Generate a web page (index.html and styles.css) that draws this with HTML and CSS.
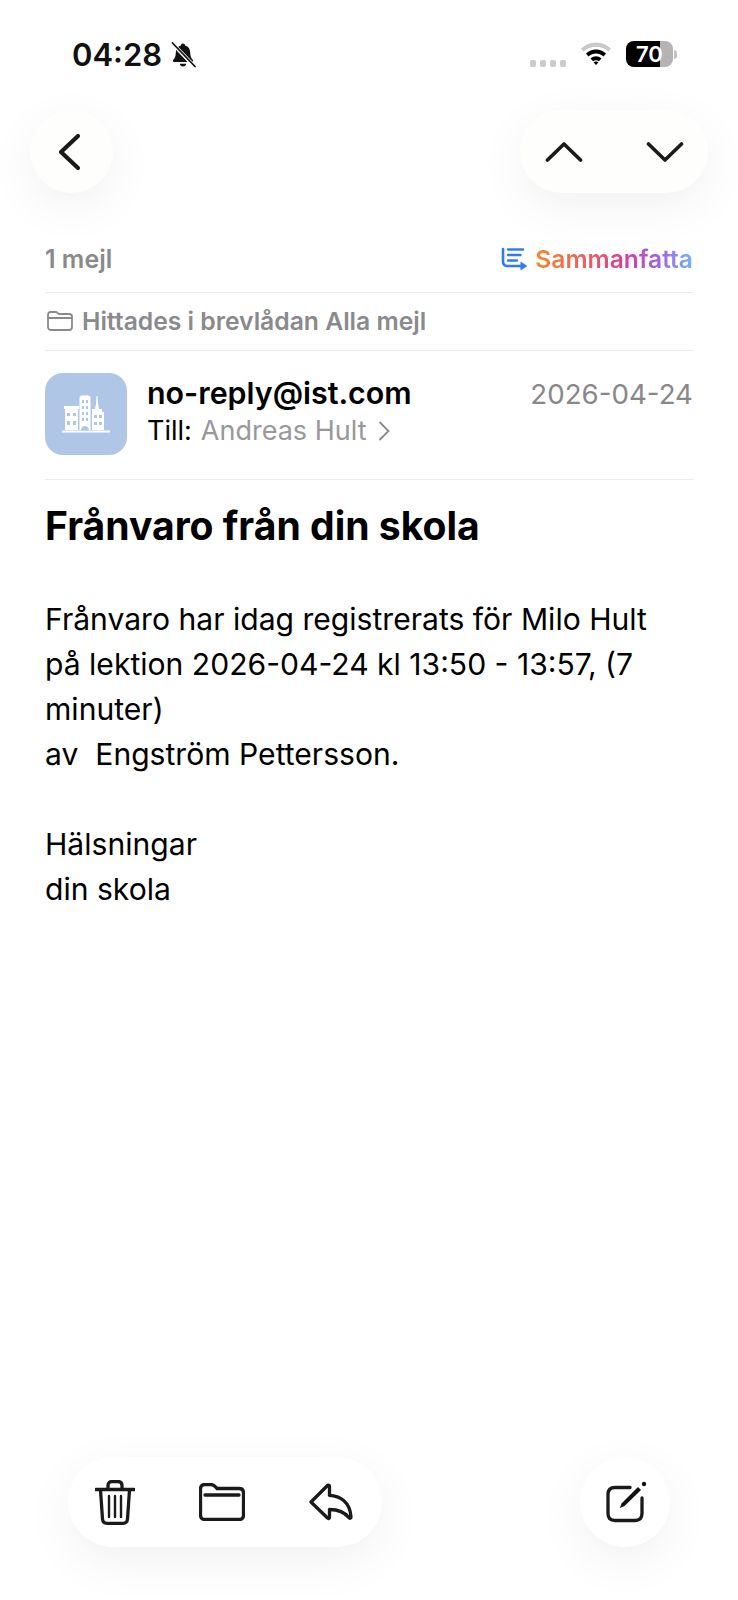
FILE: index.html
```html
<!DOCTYPE html>
<html lang="sv">
<head>
    <meta charset="UTF-8">
    <meta name="viewport" content="width=device-width, initial-scale=1.0">
    <title>Frånvaro från din skola</title>
    <link rel="stylesheet" href="styles.css">
</head>
<body>
    <div class="screen">
        <div class="status-bar">
            <div class="status-left">
                <span class="time">04:28</span>
                <svg class="bell" viewBox="0 0 26 26" width="26" height="26">
                    <path d="M13 1.500c1.200 0 2 .8 2.100 1.900 3.300.9 5.100 3.600 5.100 7.200 0 3.800 1 5.600 2.500 7.100.9.9.4 2.300-1 2.300H4.300c-1.400 0-1.900-1.400-1-2.300 1.500-1.500 2.500-3.300 2.500-7.100 0-3.600 1.800-6.300 5.100-7.200.1-1.100.9-1.900 2.100-1.900z" fill="#111"/>
                    <path d="M9.800 21.800h6.400c-.3 1.700-1.600 2.800-3.200 2.800s-2.900-1.100-3.200-2.800z" fill="#111"/>
                    <path d="M1.500 0.500L25 25" stroke="#fff" stroke-width="3.800"/>
                    <path d="M2.500 1L25 24.500" stroke="#111" stroke-width="1.800" stroke-linecap="round"/>
                </svg>
            </div>
            <div class="status-right">
                <div class="signal"><i></i><i></i><i></i><i></i></div>
                <svg class="wifi" viewBox="0 0 32 24" width="32" height="24">
                    <path d="M1 7.500C9.500-.5 22.500-.5 31 7.500l-2.500 3C21.500 4 10.500 4 3.500 10.500z" fill="#c9c9c9"/>
                    <path d="M6 12.500c5.800-5.300 14.200-5.300 20 0l-2.500 3c-4.400-4-10.600-4-15 0z" fill="#000"/>
                    <path d="M10.500 17.500c3.300-3 7.700-3 11 0l-2.600 2.800c-1.700-1.300-4.100-1.300-5.800 0z" fill="#000"/>
                    <path d="M13.500 21.200c1.500-1.100 3.500-1.100 5 0L16 24z" fill="#000"/>
                </svg>
                <div class="battery">
                    <div class="battery-body"><span class="battery-fill"></span><span class="battery-num">70</span></div>
                    <span class="battery-nub"></span>
                </div>
            </div>
        </div>

        <div class="nav">
            <button class="round-btn">
                <svg viewBox="0 0 24 38" width="24" height="38"><path d="M21 3L4 19l17 16" class="stroke back"/></svg>
            </button>
            <div class="updown">
                <svg viewBox="0 0 38 22" width="38" height="22"><path d="M2.500 19L19 3l16.500 16" class="stroke"/></svg>
                <svg viewBox="0 0 38 22" width="38" height="22"><path d="M2.500 3L19 19 35.500 3" class="stroke"/></svg>
            </div>
        </div>

        <main class="content">
            <div class="row count-row">
                <span class="count">1 mejl</span>
                <span class="summary">
                    <svg viewBox="0 0 27 24" width="27" height="24">
                        <path d="M2 2v12.500c0 3 1.600 4.500 4.500 4.500H20" fill="none" stroke="#2f7bf6" stroke-width="2.600" stroke-linecap="round"/>
                        <path d="M19.500 14.500l7 4.500-7 4.500z" fill="#2f7bf6"/>
                        <path d="M7 2.500h15M7 8h12.500M7 13.500h9" fill="none" stroke="#2f7bf6" stroke-width="2.400" stroke-linecap="round"/>
                    </svg>
                    <span class="summary-text">Sammanfatta</span>
                </span>
            </div>
            <div class="row found-row">
                <svg viewBox="0 0 26 20" width="26" height="20">
                    <path d="M1 4c0-1.700 1.100-3 2.800-3h4.700c1.100 0 1.700.4 2.400 1.100l.9.9h10.400c1.700 0 2.800 1.100 2.800 2.800V16c0 1.800-1.100 3-2.800 3H3.800C2.100 19 1 17.800 1 16zM1 7h24" fill="none" stroke="#8a8a8c" stroke-width="1.800"/>
                </svg>
                <span>Hittades i brevlådan Alla mejl</span>
            </div>
            <div class="row sender-row">
                <div class="avatar">
                    <svg viewBox="0 0 48 38" width="48" height="38">
                        <g fill="#fff">
                            <rect y="35.500" width="48" height="2"/>
                            <path d="M3 13h13v22H3z"/>
                            <path d="M2 11h15v3H2z"/>
                            <path d="M17.500 3c0-1.500 1-2.500 2.500-2.500h6c1.500 0 2.500 1 2.500 2.500v32h-11z"/>
                            <path d="M30 14h3l1-5 .5-8h1l.5 8 1 5h3v3h2v18H30z"/>
                        </g>
                        <g fill="#b0c6e6">
                            <rect x="5" y="18" width="3" height="3"/><rect x="11" y="18" width="3" height="3"/>
                            <rect x="5" y="26" width="3" height="4"/><rect x="11" y="26" width="3" height="4"/>
                            <rect x="20" y="5" width="2" height="3"/><rect x="24" y="5" width="2" height="3"/>
                            <rect x="20" y="11" width="2" height="3"/><rect x="24" y="11" width="2" height="3"/>
                            <rect x="20" y="17" width="2" height="3"/><rect x="24" y="17" width="2" height="3"/>
                            <rect x="20" y="23" width="2" height="3"/><rect x="24" y="23" width="2" height="3"/>
                            <path d="M19 35.500c0-6 8-6 8 0z"/>
                            <rect x="32" y="20" width="3" height="3"/><rect x="37" y="20" width="3" height="3"/>
                            <rect x="32" y="27" width="3" height="3"/><rect x="37" y="27" width="3" height="3"/>
                        </g>
                    </svg>
                </div>
                <div class="sender-info">
                    <div class="sender-top">
                        <span class="sender-name">no-reply@ist.com</span>
                        <span class="sender-date">2026-04-24</span>
                    </div>
                    <div class="sender-to">
                        <span class="to-label">Till:</span>
                        <span class="to-name">Andreas Hult</span>
                        <svg viewBox="0 0 12 20" width="12" height="20"><path d="M1.500 1l9 9-9 9" fill="none" stroke="#8a8a8c" stroke-width="1.800"/></svg>
                    </div>
                </div>
            </div>
            <h1 class="subject">Frånvaro från din skola</h1>
            <div class="body-text">
                <p>Frånvaro har idag registrerats för Milo Hult<br>på lektion 2026-04-24 kl 13:50 - 13:57, (7<br>minuter)<br>av&nbsp; Engström Pettersson.</p>
                <p>Hälsningar<br>din skola</p>
            </div>
        </main>

        <div class="toolbar">
            <div class="tool-group">
                <svg viewBox="0 0 40 45" width="40" height="45">
                    <path d="M1 9.500h38" class="tool-line"/>
                    <path d="M13 9V5.500C13 3 14.500 1.500 17 1.500h6c2.500 0 4 1.500 4 4V9" class="tool-line"/>
                    <path d="M5.500 10l2 29c.2 2.800 1.800 4.300 4.500 4.300h16c2.700 0 4.300-1.500 4.500-4.300l2-29" class="tool-line"/>
                    <path d="M14 16v21M20 16v21M26 16v21" class="tool-line thin"/>
                </svg>
                <svg viewBox="0 0 46 38" width="46" height="38">
                    <path d="M1.500 6c0-3 1.500-4.500 4.500-4.500h5.500c2 0 3 .5 4.300 1.700L18 5.500h22c3 0 4.500 1.500 4.500 4.500v22c0 3-1.500 4.500-4.500 4.500H6c-3 0-4.500-1.500-4.500-4.500z" class="tool-line"/>
                    <path d="M6 12h34" class="tool-line"/>
                </svg>
                <svg viewBox="0 0 44 38" width="44" height="38">
                    <path d="M2 19L18.500 2.500c.8-.8 2-.3 2 .8v9c10 .5 20.500 6 21.500 21.500.1 1.600-1.300 2-2.200.8-3.800-5-9.500-8-19.300-8.100v7.700c0 1.200-1.200 1.700-2 .8z" class="tool-line" stroke-linejoin="round"/>
                </svg>
            </div>
            <div class="tool-round">
                <svg viewBox="0 0 44 42" width="44" height="42">
                    <path d="M27 6.500H12C7.500 6.500 5 9 5 13.500v19C5 37 7.500 39.500 12 39.500h20c4.500 0 7-2.500 7-7V17" class="tool-line"/>
                    <path d="M17 27l1.500-4.500L35 6l3 3-16.500 16z" fill="#111"/>
                    <circle cx="41" cy="3" r="2.200" fill="#111"/>
                </svg>
            </div>
        </div>
    </div>
</body>
</html>
```
FILE: styles.css
```css
* {
    box-sizing: border-box;
}
body {
    margin: 0;
    background: #fff;
    font-family: Inter, "Noto Sans", sans-serif;
    color: #000;
}
.screen {
    height: 1600px;
    display: flex;
    flex-direction: column;
    overflow: hidden;
}
.status-bar {
    height: 110px;
    padding: 41px 61px 0 72px;
    display: flex;
    justify-content: space-between;
    align-items: flex-start;
}
.status-left {
    display: flex;
    align-items: center;
    gap: 8px;
}
.time {
    font-size: 31px;
    font-weight: 600;
    line-height: 28px;
    color: #111;
}
.status-right {
    display: flex;
    align-items: flex-start;
    gap: 14px;
}
.signal {
    display: flex;
    gap: 3.500px;
    margin-top: 19px;
}
.signal i {
    width: 6.500px;
    height: 6.500px;
    border-radius: 2px;
    background: #cbcbcb;
}
.battery {
    display: flex;
    align-items: center;
    gap: 1px;
}
.battery-body {
    position: relative;
    width: 47px;
    height: 26px;
    border-radius: 8px;
    background: #b4b4b4;
    overflow: hidden;
}
.battery-fill {
    display: block;
    width: 34px;
    height: 100%;
    background: #000;
}
.battery-num {
    position: absolute;
    left: 10px;
    top: 0;
    font-size: 22px;
    font-weight: 600;
    line-height: 26px;
    color: #fff;
}
.battery-nub {
    width: 3px;
    height: 9px;
    border-radius: 0 3px 3px 0;
    background: #c4c4c4;
}
.nav {
    padding: 0 30px;
    display: flex;
    justify-content: space-between;
}
.round-btn {
    width: 83px;
    height: 83px;
    border: none;
    border-radius: 50%;
    background: #fefefd;
    box-shadow: 0 14px 50px rgba(0, 0, 0, 0.06);
    display: flex;
    justify-content: center;
    align-items: center;
    padding: 0 6px 0 0;
}
.updown {
    width: 188px;
    height: 83px;
    border-radius: 42px;
    background: #fefefd;
    box-shadow: 0 14px 50px rgba(0, 0, 0, 0.06);
    display: flex;
    align-items: center;
    justify-content: center;
    gap: 63px;
}
.stroke {
    fill: none;
    stroke: #1a1a1a;
    stroke-width: 3.600;
    stroke-linecap: round;
    stroke-linejoin: round;
}
.stroke.back {
    stroke-width: 4.200;
}
.content {
    flex: 1;
    padding: 0 45px;
}
.row {
    display: flex;
    align-items: center;
    border-bottom: 1px solid #ececec;
}
.count-row {
    height: 100px;
    padding-top: 33px;
    justify-content: space-between;
}
.count {
    font-size: 25px;
    font-weight: 600;
    color: #8a8a8e;
}
.summary {
    display: flex;
    align-items: center;
    gap: 7px;
}
.summary-text {
    font-size: 24.600px;
    font-weight: 600;
    background: linear-gradient(90deg, #f5892b 0%, #ea5a64 35%, #d43f9c 58%, #a55fe0 78%, #6fb6f8 100%);
    -webkit-background-clip: text;
    background-clip: text;
    color: transparent;
}
.found-row {
    height: 58px;
    gap: 9px;
    padding: 0 0 2px 2px;
    font-size: 24.700px;
    font-weight: 600;
    color: #8a8a8e;
}
.sender-row {
    height: 129px;
    padding-bottom: 2px;
    gap: 20px;
}
.avatar {
    width: 82px;
    height: 82px;
    flex-shrink: 0;
    border-radius: 18px;
    background: #b0c6e6;
    display: flex;
    justify-content: center;
    align-items: center;
}
.sender-info {
    flex: 1;
    padding-bottom: 6px;
}
.sender-top {
    display: flex;
    justify-content: space-between;
    align-items: baseline;
}
.sender-name {
    font-size: 30.400px;
    font-weight: 600;
    line-height: 40px;
}
.sender-date {
    font-size: 27.700px;
    color: #88888a;
}
.sender-to {
    display: flex;
    align-items: center;
    gap: 9px;
    font-size: 27px;
    line-height: 36px;
}
.to-name {
    color: #98989a;
}
.sender-to svg {
    margin-left: 3px;
}
.subject {
    margin: 0;
    padding-top: 19px;
    font-size: 39.100px;
    font-weight: 700;
    line-height: 54px;
}
.body-text {
    padding-top: 44px;
    font-size: 30.100px;
    line-height: 45px;
}
.body-text p {
    margin: 0 0 45px;
}
.toolbar {
    padding: 0 68px 53px;
    display: flex;
    justify-content: space-between;
}
.tool-group {
    height: 90px;
    width: 314px;
    padding-left: 27px;
    border-radius: 45px;
    background: #fff;
    box-shadow: 0 14px 50px rgba(0, 0, 0, 0.06);
    display: flex;
    align-items: center;
    gap: 64px;
}
.tool-round {
    width: 90px;
    height: 90px;
    border-radius: 50%;
    background: #fff;
    box-shadow: 0 14px 50px rgba(0, 0, 0, 0.06);
    display: flex;
    justify-content: center;
    align-items: center;
}
.tool-line {
    fill: none;
    stroke: #1a1a1a;
    stroke-width: 3.300;
    stroke-linecap: round;
}
.tool-line.thin {
    stroke-width: 2.400;
}
```
